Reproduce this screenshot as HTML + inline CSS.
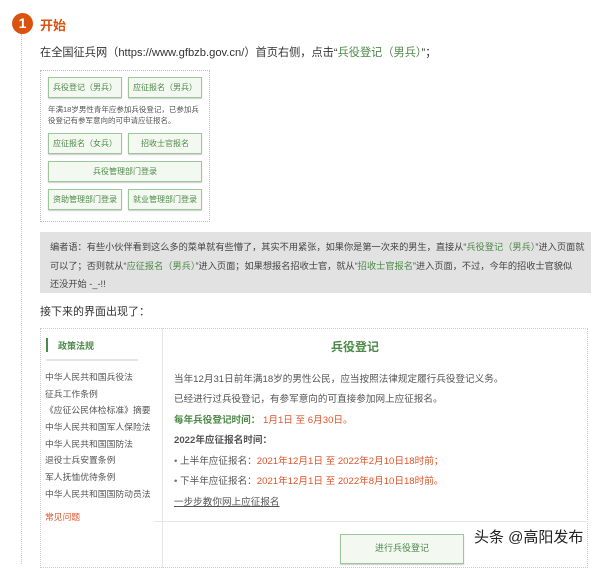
<!DOCTYPE html>
<html><head><meta charset="utf-8"><style>
*{margin:0;padding:0;box-sizing:border-box}
body{width:600px;height:558px;background:#fff;font-family:"Liberation Sans","Noto Sans CJK SC",sans-serif;color:#333;position:relative;overflow:hidden}
.a{position:absolute;white-space:nowrap}
.vl{position:absolute;left:21px;top:34px;height:530px;border-left:1px dotted #ccc}
.circ{left:12px;top:13px;width:21px;height:21px;border-radius:50%;background:#d9520f;color:#fff;font-weight:bold;font-size:14px;text-align:center;line-height:21px}
.btn{position:absolute;border:1px solid #9cc79a;background:#f3f8f1;color:#4c8a47;font-size:8px;text-align:center;line-height:19px;box-shadow:0 1px 1px #ccc}
.g{color:#4c8a47}.r{color:#e0542a}
.li{position:absolute;left:45px;font-size:8.8px;color:#555}
.rt{position:absolute;left:174px;font-size:9.6px;color:#555}
</style></head><body>
<div class="vl"></div>
<div class="a circ">1</div>
<div class="a" style="left:40px;top:15px;font-size:13px;font-weight:bold;color:#d9520f">开始</div>
<div class="a" style="left:40px;top:44px;font-size:11.2px">在全国征兵网（https://www.gfbzb.gov.cn/）首页右侧，点击“<span class="g">兵役登记（男兵）</span>”；</div>
<div class="a" style="left:40px;top:70px;width:170px;height:152px;border:1px dotted #bbb"></div>
<div class="btn" style="left:48px;top:77px;width:74px;height:21px">兵役登记（男兵）</div>
<div class="btn" style="left:128px;top:77px;width:74px;height:21px">应征报名（男兵）</div>
<div class="a" style="left:48px;top:104px;font-size:7.5px;line-height:11px;color:#555">年满18岁男性青年应参加兵役登记，已参加兵<br>役登记有参军意向的可申请应征报名。</div>
<div class="btn" style="left:48px;top:133px;width:74px;height:21px">应征报名（女兵）</div>
<div class="btn" style="left:128px;top:133px;width:74px;height:21px">招收士官报名</div>
<div class="btn" style="left:48px;top:161px;width:154px;height:21px">兵役管理部门登录</div>
<div class="btn" style="left:48px;top:189px;width:74px;height:21px">资助管理部门登录</div>
<div class="btn" style="left:128px;top:189px;width:74px;height:21px">就业管理部门登录</div>
<div class="a" style="left:40px;top:232px;width:551px;height:61px;background:#e2e2e2"></div>
<div class="a" style="left:50px;top:238px;font-size:9.2px;line-height:18.5px;color:#444">编者语：有些小伙伴看到这么多的菜单就有些懵了，其实不用紧张，如果你是第一次来的男生，直接从“<span class="g">兵役登记（男兵）</span>”进入页面就<br>可以了；否则就从“<span class="g">应征报名（男兵）</span>”进入页面；如果想报名招收士官，就从“<span class="g">招收士官报名</span>”进入页面，不过，今年的招收士官貌似<br>还没开始 -_-!!</div>
<div class="a" style="left:40px;top:303px;font-size:11px">接下来的界面出现了：</div>
<div class="a" style="left:40px;top:328px;width:548px;height:240px;border:1px dotted #ccc"></div>
<div class="a" style="left:162px;top:328px;height:240px;border-left:1px solid #e6e6e6"></div>
<div class="a" style="left:46px;top:338px;width:2px;height:14px;background:#4c8a47"></div>
<div class="a g" style="left:58px;top:339px;font-size:9px;font-weight:bold">政策法规</div>
<div class="a" style="left:46px;top:359px;width:92px;height:2px;background:#e6e6e6"></div>
<div class="li" style="top:370px">中华人民共和国兵役法</div>
<div class="li" style="top:387px">征兵工作条例</div>
<div class="li" style="top:403px">《应征公民体检标准》摘要</div>
<div class="li" style="top:420px">中华人民共和国军人保险法</div>
<div class="li" style="top:437px">中华人民共和国国防法</div>
<div class="li" style="top:453px">退役士兵安置条例</div>
<div class="li" style="top:470px">军人抚恤优待条例</div>
<div class="li" style="top:487px">中华人民共和国国防动员法</div>
<div class="li" style="top:510px;color:#e0542a">常见问题</div>
<div class="a g" style="left:355px;top:338px;transform:translateX(-50%);font-size:12px;font-weight:bold">兵役登记</div>
<div class="rt" style="top:371px">当年12月31日前年满18岁的男性公民，应当按照法律规定履行兵役登记义务。</div>
<div class="rt g" style="top:391px">已经进行过兵役登记，有参军意向的可直接参加网上应征报名。</div>
<div class="rt" style="top:412px"><b class="g">每年兵役登记时间：</b> <span class="r">1月1日 至 6月30日。</span></div>
<div class="rt g" style="top:432px;font-weight:bold">2022年应征报名时间：</div>
<div class="rt" style="top:453px"><span class="g">•</span> 上半年应征报名：<span class="r">2021年12月1日 至 2022年2月10日18时前；</span></div>
<div class="rt" style="top:473px"><span class="g">•</span> 下半年应征报名：<span class="r">2021年12月1日 至 2022年8月10日18时前。</span></div>
<div class="rt" style="top:494px;text-decoration:underline">一步步教你网上应征报名</div>
<div class="a" style="left:154px;top:521px;width:434px;border-top:1px solid #e6e6e6"></div>
<div class="btn" style="left:340px;top:534px;width:124px;height:30px;line-height:26px;font-size:9px">进行兵役登记</div>
<div class="a" style="left:474px;top:526px;font-size:15px;color:#222">头条 @高阳发布</div>
</body></html>
